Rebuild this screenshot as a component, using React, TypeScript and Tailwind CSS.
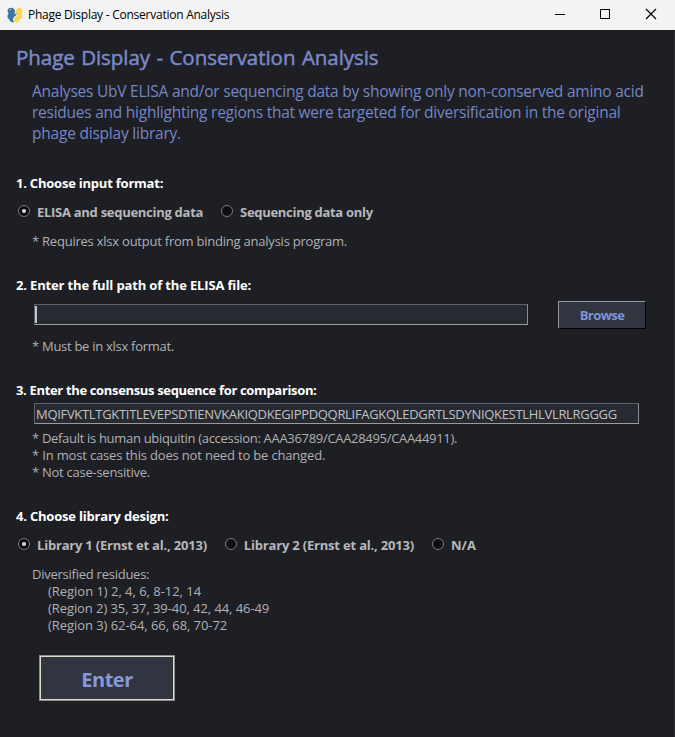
import type { ReactNode } from 'react';

function PythonLogo() {
  return (
    <svg className="ml-[7px] h-4 w-4 shrink-0" viewBox="0 0 16 16">
      <path d="M9 4.500C9 2 10.300.8 12.300.8s3.200 1.400 3.200 3.300c0 1.200-.5 1.700-1 2.200.6.600 1 1.300 1 2.400 0 1.900-1.200 2.900-2.500 3.500.1 2-1.400 3.200-3.200 3.200-1.600 0-2.800-.9-2.800-2.600C7 10.500 10 10 10.400 8.300 9.500 7.500 9 6.200 9 4.500z" fill="#f8d755" />
      <path d="M.6 4C.6 2 2 .8 4 .8S8 2 8 4.300c0 1.300-.4 2.200-1 3 1-.3 2-.7 2.600-1.300.3 3.200-3.400 3.500-3.600 6 0 1.300.5 2.200 1.200 3.300-2.400.4-4.600-.5-4.700-2.700C1.300 12 .5 11 .5 9.300c0-1.300.5-2.200 1.200-3C1 5.700.6 5 .6 4z" fill="#3b75a3" />
      <circle cx="3.300" cy="2.800" r=".7" fill="#c8dcea" />
      <circle cx="10.600" cy="13.400" r=".6" fill="#fff6c8" />
    </svg>
  );
}

function Heading({ children, className }: { children: ReactNode; className: string }) {
  return <h2 className={`ml-4 h-[17px] text-[13px] leading-[17px] font-bold whitespace-nowrap text-white ${className}`}>{children}</h2>;
}

function Note({ children, className = '' }: { children: ReactNode; className?: string }) {
  return <p className={`ml-8 h-[17px] text-[13px] leading-[17px] whitespace-pre text-[#b0b1b3] ${className}`}>{children}</p>;
}

function Radio({ label, checked = false, className = '' }: { label: string; checked?: boolean; className?: string }) {
  return (
    <label className="flex h-[17px] items-start">
      <svg className="h-3 w-3 shrink-0" viewBox="0 0 12 12">
        <circle cx="6" cy="6" r="5.500" fill="#0d0d12" stroke="#85868a" strokeWidth=".9" />
        {checked && <circle cx="6" cy="6" r="2.100" fill="#d5d5d6" />}
      </svg>
      <span className={`-mt-px ml-[7px] text-[13px] leading-[17px] font-bold whitespace-nowrap text-[#b7b8ba] ${className}`}>{label}</span>
    </label>
  );
}

export default function App() {
  return (
    <div className="flex h-[737px] w-[675px] flex-col overflow-hidden bg-[#1e1f25] font-['Open_Sans','Noto_Sans',sans-serif]">
      <header className="flex h-[30px] shrink-0 items-center bg-[#f3f3f3]">
        <PythonLogo />
        <span className="ml-[5px] text-[12px] leading-4 tracking-[-0.25px] whitespace-nowrap text-black">Phage Display - Conservation Analysis</span>
        <svg className="ml-auto h-[30px] w-[138px] shrink-0" viewBox="0 0 138 30" fill="none" stroke="#000" shapeRendering="crispEdges">
          <path d="M18 14.500h10M63.500 9.500h9v9h-9z" />
          <path d="M109 9l10 10M119 9l-10 10" shapeRendering="auto" strokeWidth="1.200" />
        </svg>
      </header>
      <main className="flex flex-1 flex-col items-start border-r border-[#2b2c31]">
        <h1 className="mt-3 ml-4 h-[30px] text-[20.5px] leading-[30px] font-medium tracking-[-0.05px] [word-spacing:1.2px] whitespace-nowrap text-[#7a8ac8] [-webkit-text-stroke:0.45px_#7a8ac8]">Phage Display - Conservation Analysis</h1>
        <div className="mt-[9px] ml-8 h-[63px] text-[15.5px] leading-[21px] whitespace-nowrap text-[#7486c4]">
          <p className="tracking-[-0.24px]">Analyses UbV ELISA and/or sequencing data by showing only non-conserved amino acid</p>
          <p className="tracking-[-0.25px]">residues and highlighting regions that were targeted for diversification in the original</p>
          <p className="tracking-[-0.22px]">phage display library.</p>
        </div>

        <Heading className="mt-[31px] tracking-[-0.22px]">1. Choose input format:</Heading>
        <div className="mt-[13px] ml-[18px] flex gap-[18px]">
          <Radio label="ELISA and sequencing data" checked className="tracking-[-0.28px]" />
          <Radio label="Sequencing data only" className="tracking-[-0.3px]" />
        </div>
        <Note className="mt-[11px] tracking-[-0.23px]">* Requires xlsx output from binding analysis program.</Note>

        <Heading className="mt-[27px] tracking-[-0.15px]">2. Enter the full path of the ELISA file:</Heading>
        <div className="mt-[7px] ml-[34px] flex h-7 items-start">
          <div className="mt-[3px] flex h-[21px] w-[494px] items-center border border-t-[#606166] border-r-[#8c8d90] border-b-[#9b9b9d] border-l-[#606166] bg-[#272a31]">
            <div className="h-[17px] w-[2px] bg-[#c3c4c5]" />
          </div>
          <button className="ml-[30px] h-7 w-[88px] border border-t-[#96979b] border-r-black border-b-black border-l-[#96979b] bg-[#31353f] text-[13px] leading-[17px] font-bold tracking-[-0.55px] text-[#7e94da]">Browse</button>
        </div>
        <Note className="mt-[9px] tracking-[-0.28px]">* Must be in xlsx format.</Note>

        <Heading className="mt-[27px] tracking-[-0.34px]">3. Enter the consensus sequence for comparison:</Heading>
        <div className="mt-[4px] ml-[34px] flex h-[21px] w-[605px] items-center border border-t-[#606166] border-r-[#8c8d90] border-b-[#9b9b9d] border-l-[#606166] bg-[#272a31] pt-px pl-px text-[13px] leading-[17px] tracking-[-0.31px] whitespace-nowrap text-[#c0c1c2]">
          <span>MQIFVKTLTGKTITLEVEPSDTIENVKAKIQDKEGIPPDQQRLIFAGKQLEDGRTLSDYNIQKESTLHLVLRLRGGGG</span>
        </div>
        <Note className="mt-[6px] tracking-[-0.31px]">* Default is human ubiquitin (accession: AAA36789/CAA28495/CAA44911).</Note>
        <Note className="tracking-[-0.17px]">* In most cases this does not need to be changed.</Note>
        <Note className="tracking-[-0.26px]">* Not case-sensitive.</Note>

        <Heading className="mt-[27px] tracking-[-0.2px]">4. Choose library design:</Heading>
        <div className="mt-[13px] ml-[18px] flex gap-[18px]">
          <Radio label="Library 1 (Ernst et al., 2013)" checked className="tracking-[-0.2px]" />
          <Radio label="Library 2 (Ernst et al., 2013)" className="tracking-[-0.19px]" />
          <Radio label="N/A" />
        </div>
        <Note className="mt-[11px] tracking-[-0.25px]">Diversified residues:</Note>
        <Note className="pl-4 tracking-[-0.03px]">(Region 1) 2, 4, 6, 8-12, 14</Note>
        <Note className="pl-4 tracking-[-0.08px]">(Region 2) 35, 37, 39-40, 42, 44, 46-49</Note>
        <Note className="pl-4 tracking-[-0.06px]">(Region 3) 62-64, 66, 68, 70-72</Note>
        <button className="mt-[21px] ml-[39px] h-[46px] w-[136px] border border-[#8f8b86] bg-[#31353f] pt-1 text-[20px] leading-[30px] font-bold tracking-[-0.5px] text-[#8599dc] shadow-[inset_0_0_0_1px_#ded9d2]">Enter</button>
      </main>
    </div>
  );
}
